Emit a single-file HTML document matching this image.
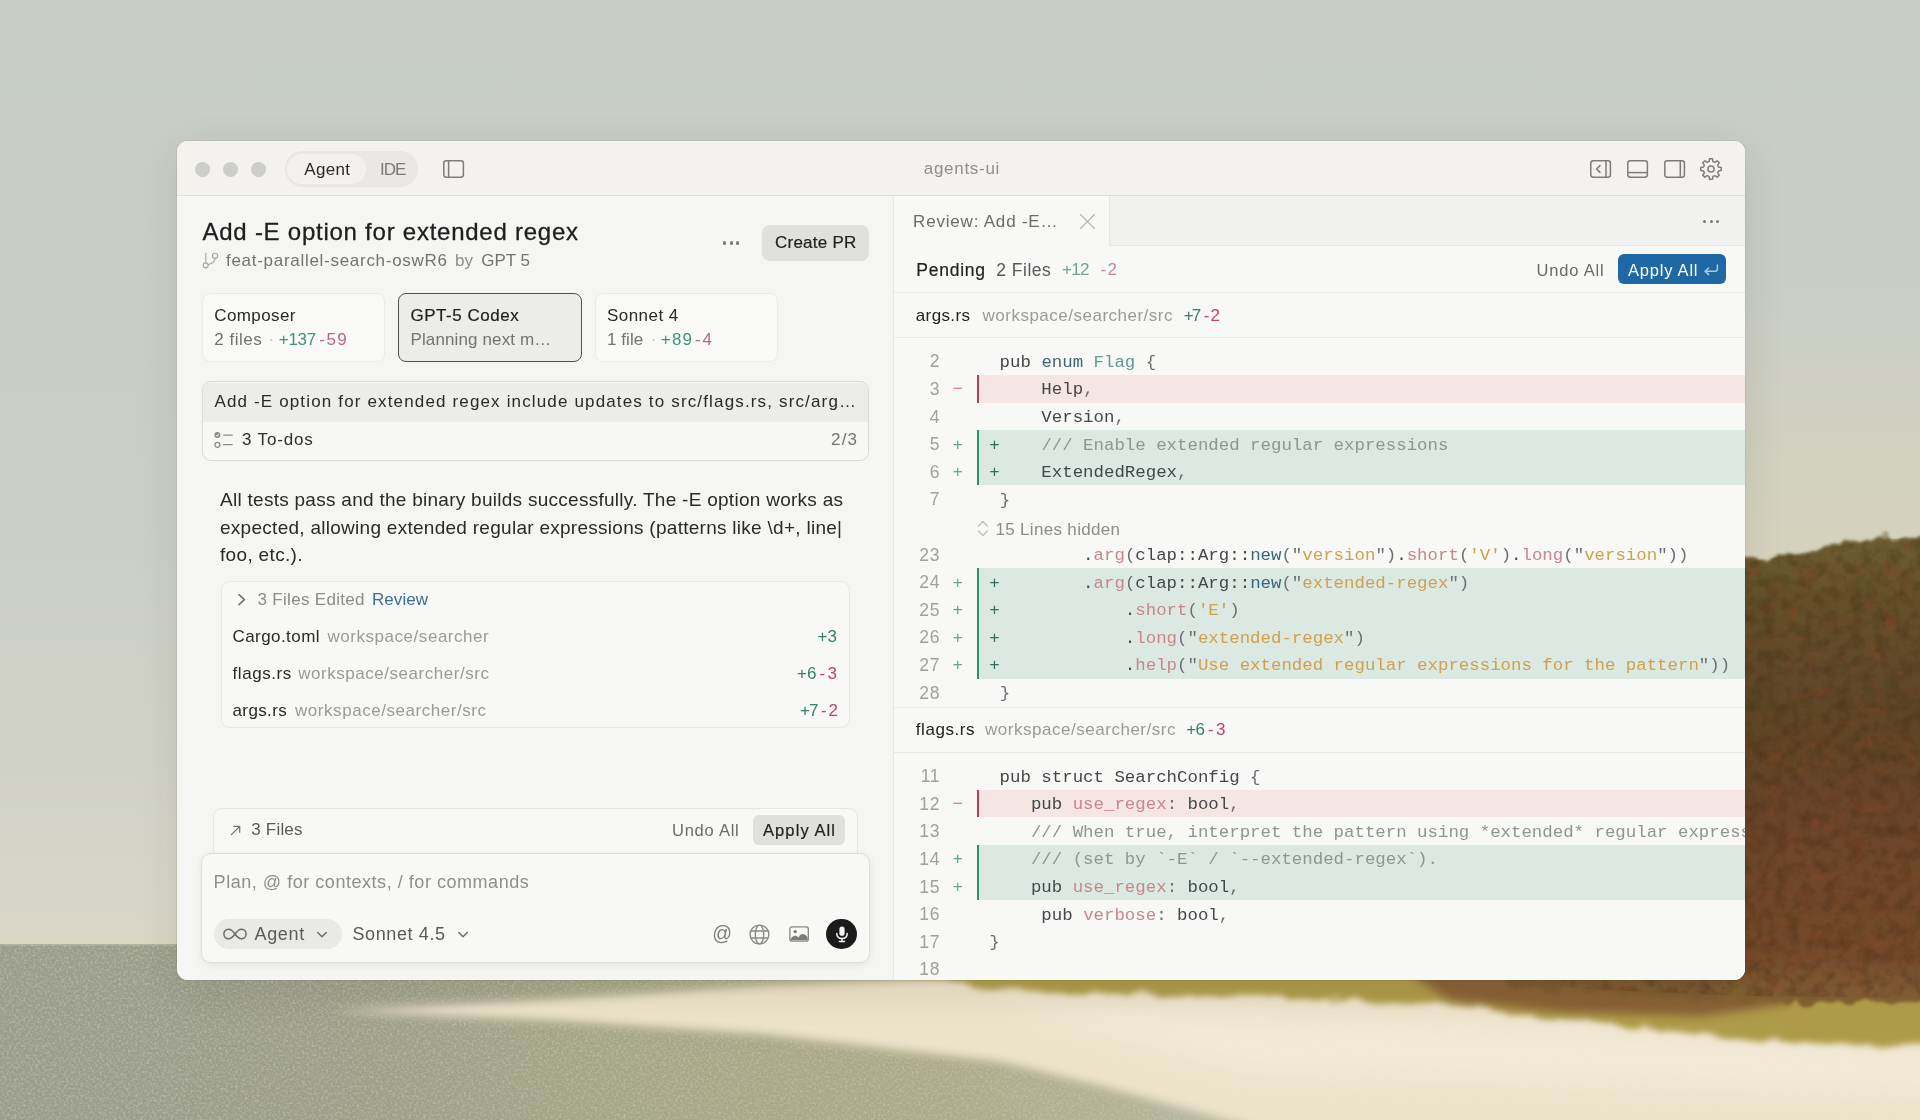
<!DOCTYPE html>
<html lang="en">
<head>
<meta charset="utf-8">
<title>agents-ui</title>
<style>
html,body{margin:0;padding:0;}
body{width:1920px;height:1120px;overflow:hidden;position:relative;background:#c8cdc6;font-family:"Liberation Sans",Arial,sans-serif;}
#bg{position:absolute;left:0;top:0;width:1920px;height:1120px;}
#shadow{position:absolute;left:177px;top:141px;width:1568px;height:838.5px;border-radius:11px;box-shadow:0 0 0 1px rgba(0,0,0,.05),0 10px 40px rgba(40,40,20,.10);}
#win{position:absolute;left:177px;top:141px;width:1568px;height:838.5px;border-radius:11px;overflow:hidden;background:#f7f7f5;}
#o{position:absolute;left:-177px;top:-141px;width:1920px;height:1120px;will-change:transform;}
.t{position:absolute;white-space:pre;display:block;}
.r{position:absolute;box-sizing:border-box;}
.ic{position:absolute;overflow:visible;}
.code{position:absolute;left:0;width:1920px;font-family:"Liberation Mono","DejaVu Sans Mono",monospace;font-size:17.4px;line-height:27.6px;white-space:pre;color:#43474a;}
.ln{position:absolute;height:27.6px;left:893px;width:852px;font-family:"Liberation Mono","DejaVu Sans Mono",monospace;font-size:17.4px;line-height:27.6px;white-space:pre;color:#43474a;}
.ln.add{background:linear-gradient(#dce9e3,#dce9e3) no-repeat 86px 0/100% 100%;}
.ln.del{background:linear-gradient(#f5e6e4,#f5e6e4) no-repeat 86px 0/100% 100%;}
.ln i{position:absolute;left:84px;top:0;width:2px;height:100%;font-style:normal;}
.ln.add i{background:#2f8f6b;}
.ln.del i{background:#c2385f;}
.ln b{position:absolute;font-weight:400;top:1.4px;}
.ln .n{right:805px;color:#a0a09e;text-align:right;font-family:"Liberation Sans",Arial,sans-serif;font-size:17.5px;letter-spacing:.6px;top:1px;}
.ln .m{left:59.4px;}
.ln.add .m{color:#62a98b;}
.ln.del .m{color:#d27f92;}
.ln .c{left:96.2px;}
.k1{color:#3f6570}.k2{color:#5f9a94}.k3{color:#346878}.fn{color:#c8868b}.s{color:#d0a04a}.cm{color:#8d9691}.p{color:#6b7073}.pl{color:#2f6e5c}
</style>
</head>
<body>
<svg id="bg" width="1920" height="1120" viewBox="0 0 1920 1120">
<defs>
<linearGradient id="sky" x1="0" y1="0" x2="0" y2="1120" gradientUnits="userSpaceOnUse">
<stop offset="0" stop-color="#c8cdc6"/><stop offset="0.45" stop-color="#cacec5"/><stop offset="0.68" stop-color="#d1d2c7"/><stop offset="0.80" stop-color="#d6d5c8"/><stop offset="0.845" stop-color="#dad6c5"/>
</linearGradient>
<linearGradient id="water" x1="0" y1="0" x2="1920" y2="0" gradientUnits="userSpaceOnUse">
<stop offset="0" stop-color="#999c8d"/><stop offset="0.16" stop-color="#9c9e8b"/><stop offset="0.36" stop-color="#a7a787"/><stop offset="0.5" stop-color="#adab89"/><stop offset="0.66" stop-color="#b8b9a4"/>
</linearGradient>
<linearGradient id="skyr" x1="0" y1="280" x2="0" y2="560" gradientUnits="userSpaceOnUse">
<stop offset="0" stop-color="#d6d2b8" stop-opacity="0"/><stop offset="1" stop-color="#d6d3bc" stop-opacity="0.9"/>
</linearGradient>
<linearGradient id="bush" x1="0" y1="530" x2="0" y2="1000" gradientUnits="userSpaceOnUse">
<stop offset="0" stop-color="#6f5f31"/><stop offset="0.14" stop-color="#64502b"/><stop offset="0.4" stop-color="#604528"/><stop offset="0.65" stop-color="#6c4529"/><stop offset="0.9" stop-color="#74492b"/><stop offset="1" stop-color="#806033"/>
</linearGradient>
<filter id="b3" x="-10%" y="-10%" width="120%" height="120%"><feGaussianBlur stdDeviation="2.5"/></filter>
<filter id="b6" x="-10%" y="-30%" width="120%" height="160%"><feGaussianBlur stdDeviation="5"/></filter>
<filter id="b8" x="-10%" y="-20%" width="120%" height="140%"><feGaussianBlur stdDeviation="8"/></filter>
<filter id="b14" x="-10%" y="-30%" width="120%" height="160%"><feGaussianBlur stdDeviation="14"/></filter>
<filter id="rough" filterUnits="userSpaceOnUse" x="1480" y="500" width="540" height="540"><feTurbulence type="fractalNoise" baseFrequency="0.035" numOctaves="3" seed="3" result="n"/><feDisplacementMap in="SourceGraphic" in2="n" scale="22" xChannelSelector="R" yChannelSelector="G"/><feGaussianBlur stdDeviation="1.6"/></filter>
<filter id="rough2" filterUnits="userSpaceOnUse" x="820" y="940" width="1200" height="140"><feTurbulence type="fractalNoise" baseFrequency="0.03 0.09" numOctaves="3" seed="5" result="n"/><feDisplacementMap in="SourceGraphic" in2="n" scale="16" xChannelSelector="R" yChannelSelector="G"/><feGaussianBlur stdDeviation="3"/></filter>
<filter id="mottle" color-interpolation-filters="sRGB" x="0" y="0" width="100%" height="100%"><feTurbulence type="fractalNoise" baseFrequency="0.08" numOctaves="4" seed="11"/><feColorMatrix type="matrix" values="0 0 0 0 0.2  0 0 0 0 0.13  0 0 0 0 0.06  2.2 0 0 0 -0.9"/></filter>
<filter id="mottle2" color-interpolation-filters="sRGB" x="0" y="0" width="100%" height="100%"><feTurbulence type="fractalNoise" baseFrequency="0.06" numOctaves="3" seed="29"/><feColorMatrix type="matrix" values="0 0 0 0 0.56  0 0 0 0 0.27  0 0 0 0 0.15  0 3 0 0 -1.7"/></filter>
<filter id="grain" color-interpolation-filters="sRGB" x="0" y="0" width="100%" height="100%"><feTurbulence type="fractalNoise" baseFrequency="0.42" numOctaves="3" seed="7"/><feColorMatrix type="matrix" values="0 0 0 0 0.8  0 0 0 0 0.8  0 0 0 0 0.7  2.4 0 0 0 -1.0"/></filter>
<clipPath id="bushclip"><path d="M1560 624 L1640 584 L1745 562 L1800 554 L1850 544 L1920 536 L1920 998 L1745 996 L1600 990 L1560 986 Z"/></clipPath>
<clipPath id="lowclip"><path d="M0 944 H1000 V974 L760 984 L560 997 L330 1009 L560 1023 L760 1036 L1000 1064 L1100 1088 L1300 1140 H0 Z"/></clipPath>
</defs>
<rect width="1920" height="1120" fill="url(#sky)"/>
<rect x="1480" y="280" width="440" height="320" fill="url(#skyr)"/>
<!-- water / ground -->
<rect x="0" y="944" width="1920" height="176" fill="url(#water)"/>
<rect x="0" y="938" width="430" height="7" fill="#ddd5b6" opacity=".55" filter="url(#b3)"/>
<!-- sand -->
<path d="M330 1011 L560 999 L760 986 L1000 976 L2000 976 L2000 1140 L1300 1140 L1100 1086 L1000 1062 L760 1034 L560 1021 Z" fill="#ede2ca" filter="url(#b6)"/>
<path d="M1000 1005 L2000 1044 L2000 1100 L1250 1075 Z" fill="#f4ecdb" opacity=".7" filter="url(#b14)"/>
<!-- grass band -->
<path d="M860 966 L2000 966 L2000 1050 L1760 1040 L1600 1022 L1450 1006 L1250 996 L1000 990 Z" fill="#ae9b49" filter="url(#rough2)"/>
<path d="M1400 968 L1800 968 L1790 1004 L1700 1016 L1560 1012 L1450 1000 Z" fill="#7f5230" opacity=".8" filter="url(#b6)"/>
<!-- bush -->
<path d="M1500 640 L1640 584 L1745 560 L1800 552 L1850 542 L1920 534 L2000 530 L2000 1004 L1745 1002 L1600 996 L1500 985 Z" fill="url(#bush)" filter="url(#rough)"/>
<g clip-path="url(#bushclip)"><rect x="1560" y="520" width="360" height="490" filter="url(#mottle)" opacity=".3"/><rect x="1560" y="520" width="360" height="490" filter="url(#mottle2)" opacity=".45"/></g>
<g clip-path="url(#lowclip)"><rect x="0" y="944" width="1920" height="176" filter="url(#grain)" opacity=".55"/></g>
</svg>

<div id="shadow"></div>
<div id="win"><div id="o">
<div class="r" style="left:177.00px;top:141.00px;width:1568.00px;height:55.00px;background:#f3f2ef;border-bottom:1px solid #e0dfdc;"></div>
<div class="r" style="left:195.25px;top:161.50px;width:15.00px;height:15.00px;border-radius:50%;background:#cdcdcb;"></div>
<div class="r" style="left:223.00px;top:161.50px;width:15.00px;height:15.00px;border-radius:50%;background:#cdcdcb;"></div>
<div class="r" style="left:250.50px;top:161.50px;width:15.00px;height:15.00px;border-radius:50%;background:#cdcdcb;"></div>
<div class="r" style="left:284.70px;top:151.40px;width:133.80px;height:35.20px;border-radius:17.6px;background:#e9e8e5;"></div>
<div class="r" style="left:286.80px;top:153.60px;width:79.70px;height:30.80px;border-radius:15.4px;background:#f2f1ee;border:1px solid #f5f4f1;"></div>
<span class="t " style="left:304.25px;top:158.21px;font-size:17px;line-height:24px;color:#2a2a2a;letter-spacing:0.331px;">Agent</span>
<span class="t " style="left:380.00px;top:158.21px;font-size:17px;line-height:24px;color:#7a7a78;letter-spacing:-1.044px;">IDE</span>
<svg class="ic" style="left:441.6px;top:159px" width="24" height="20" viewBox="0 0 24 20"><rect x="1.8" y="1.8" width="19.6" height="16.4" rx="2.4" fill="none" stroke="#7c7c7a" stroke-width="1.5"/><line x1="6.6" y1="2" x2="6.6" y2="18" stroke="#7c7c7a" stroke-width="1.5"/></svg>
<span class="t " style="left:923.75px;top:157.46px;font-size:17px;line-height:24px;color:#8e8e8c;letter-spacing:0.714px;">agents-ui</span>
<svg class="ic" style="left:1589px;top:159px" width="24" height="20" viewBox="0 0 24 20"><rect x="1.8" y="1.8" width="19.6" height="16.4" rx="2.4" fill="none" stroke="#7c7c7a" stroke-width="1.5"/><line x1="17" y1="2" x2="17" y2="18" stroke="#7c7c7a" stroke-width="1.5"/><path d="M11 6.6 L7.6 10 L11 13.4" fill="none" stroke="#7c7c7a" stroke-width="1.5" stroke-linecap="round" stroke-linejoin="round"/></svg>
<svg class="ic" style="left:1625.75px;top:159px" width="24" height="20" viewBox="0 0 24 20"><rect x="1.8" y="1.8" width="19.6" height="16.4" rx="2.4" fill="none" stroke="#7c7c7a" stroke-width="1.5"/><line x1="2" y1="13.6" x2="21.2" y2="13.6" stroke="#7c7c7a" stroke-width="1.5"/></svg>
<svg class="ic" style="left:1662.75px;top:159px" width="24" height="20" viewBox="0 0 24 20"><rect x="1.8" y="1.8" width="19.6" height="16.4" rx="2.4" fill="none" stroke="#7c7c7a" stroke-width="1.5"/><line x1="17.3" y1="2" x2="17.3" y2="18" stroke="#7c7c7a" stroke-width="1.5"/></svg>
<svg class="ic" style="left:1699px;top:157px" width="24" height="24" viewBox="0 0 24 24" fill="none" stroke="#7c7c7a" stroke-width="1.45" stroke-linecap="round" stroke-linejoin="round"><path d="M10.07 4.55 L10.48 1.81 L13.52 1.81 L13.93 4.55 L15.91 5.37 L18.13 3.72 L20.28 5.87 L18.63 8.09 L19.45 10.07 L22.19 10.48 L22.19 13.52 L19.45 13.93 L18.63 15.91 L20.28 18.13 L18.13 20.28 L15.91 18.63 L13.93 19.45 L13.52 22.19 L10.48 22.19 L10.07 19.45 L8.09 18.63 L5.87 20.28 L3.72 18.13 L5.37 15.91 L4.55 13.93 L1.81 13.52 L1.81 10.48 L4.55 10.07 L5.37 8.09 L3.72 5.87 L5.87 3.72 L8.09 5.37 Z"/><circle cx="12" cy="12" r="3.1"/></svg>
<div class="r" style="left:177.00px;top:196.00px;width:716.00px;height:784.00px;background:#f5f5f3;"></div>
<span class="t " style="left:202.50px;top:219.78px;font-size:24px;line-height:24px;color:#1e1e1e;letter-spacing:0.751px;-webkit-text-stroke:0.3px #1e1e1e;">Add -E option for extended regex</span>
<svg class="ic" style="left:200px;top:250px" width="20" height="20" viewBox="0 0 20 20" fill="none" stroke="#a6a6a4" stroke-width="1.15" stroke-linecap="round"><path d="M5.8 3.2 V12.7"/><circle cx="5.7" cy="15.3" r="2.5"/><circle cx="15" cy="5.8" r="2.6"/><path d="M15 8.4 C15 12.6 11.6 13.4 8.2 14.7"/></svg>
<span class="t " style="left:226.00px;top:248.71px;font-size:17px;line-height:24px;color:#737371;letter-spacing:0.714px;">feat-parallel-search-oswR6</span>
<span class="t " style="left:455.00px;top:248.71px;font-size:17px;line-height:24px;color:#8e8e8c;letter-spacing:0.045px;">by</span>
<span class="t " style="left:481.25px;top:248.71px;font-size:17px;line-height:24px;color:#737371;letter-spacing:-0.017px;">GPT 5</span>
<div class="r" style="left:723.20px;top:241.40px;width:3.20px;height:3.20px;border-radius:50%;background:#7a7a78;"></div>
<div class="r" style="left:729.70px;top:241.40px;width:3.20px;height:3.20px;border-radius:50%;background:#7a7a78;"></div>
<div class="r" style="left:736.20px;top:241.40px;width:3.20px;height:3.20px;border-radius:50%;background:#7a7a78;"></div>
<div class="r" style="left:762.00px;top:224.50px;width:107.25px;height:36.25px;border-radius:8px;background:#e0e0de;"></div>
<span class="t " style="left:775.00px;top:231.46px;font-size:17px;line-height:24px;color:#222;letter-spacing:0.236px;-webkit-text-stroke:0.2px #222;">Create PR</span>
<div class="r" style="left:202.00px;top:292.50px;width:182.50px;height:69.50px;border-radius:8px;border:1.5px solid #ebebe9;background:#f9f9f7;"></div>
<div class="r" style="left:398.00px;top:292.50px;width:184.00px;height:69.50px;border-radius:8px;border:1.5px solid #505050;background:#ececea;"></div>
<div class="r" style="left:595.00px;top:292.50px;width:183.00px;height:69.50px;border-radius:8px;border:1.5px solid #ebebe9;background:#f9f9f7;"></div>
<span class="t " style="left:214.25px;top:303.96px;font-size:17px;line-height:24px;color:#2a2a2a;letter-spacing:0.405px;">Composer</span>
<span class="t " style="left:214.25px;top:327.71px;font-size:17px;line-height:24px;color:#737371;letter-spacing:0.515px;">2 files</span>
<span class="t " style="left:268.50px;top:327.71px;font-size:17px;line-height:24px;color:#c4c4c2;letter-spacing:0.000px;">·</span>
<span class="t " style="left:278.75px;top:327.71px;font-size:17px;line-height:24px;color:#3f9473;letter-spacing:-0.264px;">+137</span>
<span class="t " style="left:319.25px;top:327.71px;font-size:17px;line-height:24px;color:#b9687a;letter-spacing:1.465px;">-59</span>
<span class="t " style="left:410.50px;top:303.96px;font-size:17px;line-height:24px;color:#1e1e1e;letter-spacing:0.526px;-webkit-text-stroke:0.2px #1e1e1e;">GPT-5 Codex</span>
<span class="t " style="left:410.50px;top:327.71px;font-size:17px;line-height:24px;color:#737371;letter-spacing:0.123px;">Planning next m…</span>
<span class="t " style="left:607.00px;top:303.96px;font-size:17px;line-height:24px;color:#2a2a2a;letter-spacing:0.456px;">Sonnet 4</span>
<span class="t " style="left:607.00px;top:327.71px;font-size:17px;line-height:24px;color:#737371;letter-spacing:0.068px;">1 file</span>
<span class="t " style="left:650.80px;top:327.71px;font-size:17px;line-height:24px;color:#c4c4c2;letter-spacing:0.000px;">·</span>
<span class="t " style="left:660.75px;top:327.71px;font-size:17px;line-height:24px;color:#3f9473;letter-spacing:1.206px;">+89</span>
<span class="t " style="left:695.00px;top:327.71px;font-size:17px;line-height:24px;color:#b9687a;letter-spacing:1.884px;">-4</span>
<div class="r" style="left:201.50px;top:381.00px;width:667.50px;height:79.50px;border-radius:9px;border:1.5px solid #d9d9d7;background:#f7f7f5;overflow:hidden;"></div>
<div class="r" style="left:203.00px;top:382.50px;width:664.50px;height:39.50px;border-radius:7.5px 7.5px 0 0;background:#ececea;"></div>
<span class="t " style="left:214.40px;top:389.71px;font-size:17px;line-height:24px;color:#2a2a2a;letter-spacing:1.152px;">Add -E option for extended regex include updates to src/flags.rs, src/arg…</span>
<svg class="ic" style="left:212.5px;top:430.5px" width="21" height="19" viewBox="0 0 21 19" fill="none" stroke="#8a8a88" stroke-width="1.3" stroke-linecap="round"><circle cx="4.4" cy="4.1" r="3" fill="#8a8a88" stroke="none"/><path d="M3.1 4.2 L4 5.2 L5.8 3" stroke="#f7f7f5" stroke-width="1"/><circle cx="4.4" cy="13.8" r="2.5"/><path d="M10.6 4.2 H19.2"/><path d="M10.6 13.6 H19.2"/></svg>
<span class="t " style="left:242.00px;top:427.71px;font-size:17px;line-height:24px;color:#2f2f2f;letter-spacing:0.843px;">3 To-dos</span>
<span class="t " style="left:831.00px;top:427.71px;font-size:17px;line-height:24px;color:#737371;letter-spacing:1.184px;">2/3</span>
<span class="t " style="left:220.00px;top:488.27px;font-size:19px;line-height:24px;color:#2a2a2a;letter-spacing:0.273px;">All tests pass and the binary builds successfully. The -E option works as</span>
<span class="t " style="left:220.00px;top:515.77px;font-size:19px;line-height:24px;color:#2a2a2a;letter-spacing:0.275px;">expected, allowing extended regular expressions (patterns like \d+, line|</span>
<span class="t " style="left:220.00px;top:543.27px;font-size:19px;line-height:24px;color:#2a2a2a;letter-spacing:0.330px;">foo, etc.).</span>
<div class="r" style="left:221.00px;top:581.00px;width:628.50px;height:146.50px;border-radius:9px;border:1.5px solid #e8e8e6;background:#f8f8f6;"></div>
<svg class="ic" style="left:235px;top:591px" width="14" height="17" viewBox="0 0 14 17" fill="none" stroke="#6f6f6d" stroke-width="1.5" stroke-linecap="round" stroke-linejoin="round"><path d="M4 3.6 L9.4 8.6 L4 13.6"/></svg>
<span class="t " style="left:257.50px;top:587.71px;font-size:17px;line-height:24px;color:#8c8c8a;letter-spacing:0.308px;">3 Files Edited</span>
<span class="t " style="left:372.00px;top:587.71px;font-size:17px;line-height:24px;color:#3a6f92;letter-spacing:0.052px;">Review</span>
<span class="t " style="left:232.50px;top:625.21px;font-size:17px;line-height:24px;color:#2a2a2a;letter-spacing:0.429px;">Cargo.toml</span>
<span class="t " style="left:327.50px;top:625.21px;font-size:17px;line-height:24px;color:#9a9a98;letter-spacing:0.537px;">workspace/searcher</span>
<span class="t " style="left:817.50px;top:625.21px;font-size:17px;line-height:24px;color:#35806a;letter-spacing:0.118px;">+3</span>
<span class="t " style="left:232.50px;top:661.96px;font-size:17px;line-height:24px;color:#2a2a2a;letter-spacing:0.565px;">flags.rs</span>
<span class="t " style="left:298.25px;top:661.96px;font-size:17px;line-height:24px;color:#9a9a98;letter-spacing:0.535px;">workspace/searcher/src</span>
<span class="t " style="left:797.00px;top:661.96px;font-size:17px;line-height:24px;color:#35806a;letter-spacing:0.118px;">+6</span>
<span class="t " style="left:819.50px;top:661.96px;font-size:17px;line-height:24px;color:#bf4566;letter-spacing:2.384px;">-3</span>
<span class="t " style="left:232.50px;top:698.96px;font-size:17px;line-height:24px;color:#2a2a2a;letter-spacing:0.383px;">args.rs</span>
<span class="t " style="left:295.00px;top:698.96px;font-size:17px;line-height:24px;color:#9a9a98;letter-spacing:0.547px;">workspace/searcher/src</span>
<span class="t " style="left:800.00px;top:698.96px;font-size:17px;line-height:24px;color:#35806a;letter-spacing:-0.882px;">+7</span>
<span class="t " style="left:821.00px;top:698.96px;font-size:17px;line-height:24px;color:#bf4566;letter-spacing:1.884px;">-2</span>
<div class="r" style="left:212.50px;top:808.00px;width:645.50px;height:62.00px;border-radius:9px 9px 0 0;border:1.5px solid #e6e6e4;background:#f8f8f6;"></div>
<svg class="ic" style="left:227.5px;top:822.5px" width="15" height="15" viewBox="0 0 15 15" fill="none" stroke="#727270" stroke-width="1.25" stroke-linecap="round" stroke-linejoin="round"><path d="M3.4 11.6 L11.4 3.6"/><path d="M5.8 3.3 H11.7 V9.2"/></svg>
<span class="t " style="left:251.25px;top:818.21px;font-size:17px;line-height:24px;color:#5a5a58;letter-spacing:0.197px;">3 Files</span>
<span class="t " style="left:672.00px;top:818.38px;font-size:16.5px;line-height:24px;color:#6a6a68;letter-spacing:0.756px;">Undo All</span>
<div class="r" style="left:753.25px;top:814.50px;width:91.25px;height:30.00px;border-radius:6px;background:#dfdfdd;"></div>
<span class="t " style="left:763.00px;top:818.38px;font-size:16.5px;line-height:24px;color:#1e1e1e;letter-spacing:1.089px;-webkit-text-stroke:0.2px #1e1e1e;">Apply All</span>
<div class="r" style="left:200.50px;top:853.00px;width:669.50px;height:109.50px;border-radius:10px;border:1.5px solid #dddddb;background:#f8f8f6;box-shadow:0 2px 10px rgba(0,0,0,.07);"></div>
<span class="t " style="left:213.60px;top:869.86px;font-size:18px;line-height:24px;color:#8f8f8d;letter-spacing:0.536px;">Plan, @ for contexts, / for commands</span>
<div class="r" style="left:213.75px;top:919.25px;width:128.25px;height:29.50px;border-radius:15px;background:#e9e9e7;"></div>
<svg class="ic" style="left:222px;top:926px" width="26" height="16" viewBox="0 0 26 16" fill="none" stroke="#6a6a68" stroke-width="1.5"><path d="M13 8 C10.6 4.6 8.8 3.2 6.6 3.2 C3.8 3.2 1.9 5.3 1.9 8 C1.9 10.7 3.8 12.8 6.6 12.8 C8.8 12.8 10.6 11.4 13 8 C15.4 4.6 17.2 3.2 19.4 3.2 C22.2 3.2 24.1 5.3 24.1 8 C24.1 10.7 22.2 12.8 19.4 12.8 C17.2 12.8 15.4 11.4 13 8 Z"/></svg>
<span class="t " style="left:254.50px;top:922.36px;font-size:18px;line-height:24px;color:#5a5a58;letter-spacing:0.678px;">Agent</span>
<svg class="ic" style="left:314.6px;top:929px" width="14" height="12" viewBox="0 0 14 12" fill="none" stroke="#6a6a68" stroke-width="1.4" stroke-linecap="round" stroke-linejoin="round"><path d="M2.7 3.4 L7 7.7 L11.3 3.4"/></svg>
<span class="t " style="left:352.50px;top:922.36px;font-size:18px;line-height:24px;color:#5a5a58;letter-spacing:0.603px;">Sonnet 4.5</span>
<svg class="ic" style="left:455.7px;top:929px" width="14" height="12" viewBox="0 0 14 12" fill="none" stroke="#6a6a68" stroke-width="1.4" stroke-linecap="round" stroke-linejoin="round"><path d="M2.7 3.4 L7 7.7 L11.3 3.4"/></svg>
<span class="t " style="left:712.30px;top:921.34px;font-size:19.5px;line-height:24px;color:#7c7c7a;letter-spacing:0.000px;">@</span>
<svg class="ic" style="left:747.5px;top:922.5px" width="23" height="23" viewBox="0 0 23 23" fill="none" stroke="#8a8a88" stroke-width="1.4"><circle cx="11.5" cy="11.5" r="9.4"/><ellipse cx="11.5" cy="11.5" rx="4.2" ry="9.4"/><path d="M3 8 H20 M3 15 H20"/></svg>
<svg class="ic" style="left:787.5px;top:925px" width="23" height="18" viewBox="0 0 23 18"><rect x="1.9" y="1.9" width="18.4" height="14.2" rx="2.2" fill="none" stroke="#8a8a88" stroke-width="1.4"/><circle cx="7.2" cy="6.6" r="1.7" fill="#7c7c7a"/><path d="M3 15.2 L3 13.4 C5 10.4 8 9.6 10.4 12.4 C12.6 8.2 16.6 7.8 19.4 12.2 V15.2 Z" fill="#7c7c7a"/></svg>
<div class="r" style="left:826.25px;top:918.75px;width:30.75px;height:30.50px;border-radius:50%;background:#1b1b1b;"></div>
<svg class="ic" style="left:831.6px;top:924px" width="20" height="20" viewBox="0 0 20 20" fill="none" stroke="#f4f4f2" stroke-width="1.5" stroke-linecap="round"><rect x="7.4" y="2.4" width="5.2" height="9.4" rx="2.6" fill="#f4f4f2" stroke="none"/><path d="M4.8 9.6 C4.8 13 7.2 14.6 10 14.6 C12.8 14.6 15.2 13 15.2 9.6"/><path d="M10 14.8 V17.4 M7.4 17.5 H12.6"/></svg>
<div class="r" style="left:893.00px;top:196.00px;width:852.00px;height:784.00px;background:#f8f8f7;border-left:1px solid #e7e7e5;"></div>
<div class="r" style="left:894.00px;top:196.00px;width:851.00px;height:49.50px;background:#f1f1ef;border-bottom:1px solid #e7e7e5;"></div>
<div class="r" style="left:894.00px;top:196.00px;width:216.00px;height:50.00px;background:#f8f8f7;border-right:1px solid #e7e7e5;"></div>
<span class="t " style="left:913.10px;top:209.96px;font-size:17px;line-height:24px;color:#6c6c6a;letter-spacing:0.799px;">Review: Add -E…</span>
<svg class="ic" style="left:1079px;top:213px" width="17" height="17" viewBox="0 0 17 17" fill="none" stroke="#b0b0ae" stroke-width="1.3" stroke-linecap="round"><path d="M1.6 1.6 L15.4 15.4 M15.4 1.6 L1.6 15.4"/></svg>
<div class="r" style="left:1703.10px;top:219.65px;width:3.20px;height:3.20px;border-radius:50%;background:#7a7a78;"></div>
<div class="r" style="left:1709.60px;top:219.65px;width:3.20px;height:3.20px;border-radius:50%;background:#7a7a78;"></div>
<div class="r" style="left:1716.10px;top:219.65px;width:3.20px;height:3.20px;border-radius:50%;background:#7a7a78;"></div>
<div class="r" style="left:894.00px;top:292.00px;width:851.00px;height:1.00px;background:#e9e9e7;"></div>
<span class="t " style="left:916.25px;top:257.54px;font-size:17.5px;line-height:24px;color:#222;letter-spacing:0.754px;-webkit-text-stroke:0.2px #222;">Pending</span>
<span class="t " style="left:996.25px;top:257.54px;font-size:17.5px;line-height:24px;color:#58585a;letter-spacing:0.493px;">2 Files</span>
<span class="t " style="left:1062.00px;top:257.71px;font-size:17px;line-height:24px;color:#6ba791;letter-spacing:-0.669px;">+12</span>
<span class="t " style="left:1100.50px;top:257.71px;font-size:17px;line-height:24px;color:#cc8693;letter-spacing:1.384px;">-2</span>
<span class="t " style="left:1536.50px;top:257.88px;font-size:16.5px;line-height:24px;color:#6a6a68;letter-spacing:0.828px;">Undo All</span>
<div class="r" style="left:1617.50px;top:253.75px;width:108.75px;height:30.50px;border-radius:6px;background:#1f68a3;"></div>
<span class="t " style="left:1628.00px;top:257.88px;font-size:16.5px;line-height:24px;color:#ffffff;letter-spacing:0.777px;">Apply All</span>
<svg class="ic" style="left:1703px;top:261px" width="17" height="17" viewBox="0 0 17 17" fill="none" stroke="#a8cbe6" stroke-width="1.5" stroke-linecap="round" stroke-linejoin="round"><path d="M14.4 4 V8.3 a2 2 0 0 1 -2 2 H2.4"/><path d="M5.6 7 L2.2 10.3 L5.6 13.6"/></svg>
<span class="t " style="left:915.75px;top:303.71px;font-size:17px;line-height:24px;color:#222;letter-spacing:0.383px;">args.rs</span>
<span class="t " style="left:982.50px;top:303.71px;font-size:17px;line-height:24px;color:#9a9a98;letter-spacing:0.500px;">workspace/searcher/src</span>
<span class="t " style="left:1183.75px;top:303.71px;font-size:17px;line-height:24px;color:#35806a;letter-spacing:-1.882px;">+7</span>
<span class="t " style="left:1203.75px;top:303.71px;font-size:17px;line-height:24px;color:#bf4566;letter-spacing:1.134px;">-2</span>
<div class="r" style="left:894.00px;top:337.00px;width:851.00px;height:1.00px;background:#e9e9e7;"></div>
<div class="ln" style="top:347.40px"><b class="n">2</b><b class="m"></b><b class="c"> pub <span class="k1">enum</span> <span class="k2">Flag</span> <span class="p">{</span></b></div>
<div class="ln del" style="top:375.00px"><i></i><b class="n">3</b><b class="m">−</b><b class="c">     Help<span class="p">,</span></b></div>
<div class="ln" style="top:402.60px"><b class="n">4</b><b class="m"></b><b class="c">     Version<span class="p">,</span></b></div>
<div class="ln add" style="top:430.20px"><i></i><b class="n">5</b><b class="m">+</b><b class="c"><span class="pl">+</span>    <span class="cm">/// Enable extended regular expressions</span></b></div>
<div class="ln add" style="top:457.80px"><i></i><b class="n">6</b><b class="m">+</b><b class="c"><span class="pl">+</span>    ExtendedRegex<span class="p">,</span></b></div>
<div class="ln" style="top:485.40px"><b class="n">7</b><b class="m"></b><b class="c"> <span class="p">}</span></b></div>
<svg class="ic" style="left:975.5px;top:518.60px" width="14" height="19" viewBox="0 0 14 19" fill="none" stroke="#bcbcba" stroke-width="1.3" stroke-linecap="round" stroke-linejoin="round"><path d="M2.6 7 L7 2.4 L11.4 7 M2.6 12 L7 16.6 L11.4 12"/></svg>
<span class="t " style="left:995.50px;top:517.51px;font-size:17px;line-height:24px;color:#8c8c8a;letter-spacing:0.318px;">15 Lines hidden</span>
<div class="ln" style="top:540.60px"><b class="n">23</b><b class="m"></b><b class="c">         .<span class="fn">arg</span><span class="p">(</span>clap::Arg::<span class="k3">new</span><span class="p">(&quot;</span><span class="s">version</span><span class="p">&quot;)</span>.<span class="fn">short</span><span class="p">(</span><span class="s">'V'</span><span class="p">)</span>.<span class="fn">long</span><span class="p">(&quot;</span><span class="s">version</span><span class="p">&quot;))</span></b></div>
<div class="ln add" style="top:568.20px"><i></i><b class="n">24</b><b class="m">+</b><b class="c"><span class="pl">+</span>        .<span class="fn">arg</span><span class="p">(</span>clap::Arg::<span class="k3">new</span><span class="p">(&quot;</span><span class="s">extended-regex</span><span class="p">&quot;)</span></b></div>
<div class="ln add" style="top:595.80px"><i></i><b class="n">25</b><b class="m">+</b><b class="c"><span class="pl">+</span>            .<span class="fn">short</span><span class="p">(</span><span class="s">'E'</span><span class="p">)</span></b></div>
<div class="ln add" style="top:623.40px"><i></i><b class="n">26</b><b class="m">+</b><b class="c"><span class="pl">+</span>            .<span class="fn">long</span><span class="p">(&quot;</span><span class="s">extended-regex</span><span class="p">&quot;)</span></b></div>
<div class="ln add" style="top:651.00px"><i></i><b class="n">27</b><b class="m">+</b><b class="c"><span class="pl">+</span>            .<span class="fn">help</span><span class="p">(&quot;</span><span class="s">Use extended regular expressions for the pattern</span><span class="p">&quot;))</span></b></div>
<div class="ln" style="top:678.60px"><b class="n">28</b><b class="m"></b><b class="c"> <span class="p">}</span></b></div>
<div class="r" style="left:894.00px;top:706.50px;width:851.00px;height:1.00px;background:#e9e9e7;"></div>
<span class="t " style="left:915.75px;top:718.46px;font-size:17px;line-height:24px;color:#222;letter-spacing:0.565px;">flags.rs</span>
<span class="t " style="left:985.00px;top:718.46px;font-size:17px;line-height:24px;color:#9a9a98;letter-spacing:0.524px;">workspace/searcher/src</span>
<span class="t " style="left:1186.25px;top:718.46px;font-size:17px;line-height:24px;color:#35806a;letter-spacing:-0.632px;">+6</span>
<span class="t " style="left:1208.00px;top:718.46px;font-size:17px;line-height:24px;color:#bf4566;letter-spacing:2.384px;">-3</span>
<div class="r" style="left:894.00px;top:751.50px;width:851.00px;height:1.00px;background:#e9e9e7;"></div>
<div class="ln" style="top:762.20px"><b class="n">11</b><b class="m"></b><b class="c"> pub struct SearchConfig <span class="p">{</span></b></div>
<div class="ln del" style="top:789.80px"><i></i><b class="n">12</b><b class="m">−</b><b class="c">    pub <span class="fn">use_regex</span><span class="p">:</span> bool<span class="p">,</span></b></div>
<div class="ln" style="top:817.40px"><b class="n">13</b><b class="m"></b><b class="c">    <span class="cm">/// When true, interpret the pattern using *extended* regular expressions</span></b></div>
<div class="ln add" style="top:845.00px"><i></i><b class="n">14</b><b class="m">+</b><b class="c">    <span class="cm">/// (set by `-E` / `--extended-regex`).</span></b></div>
<div class="ln add" style="top:872.60px"><i></i><b class="n">15</b><b class="m">+</b><b class="c">    pub <span class="fn">use_regex</span><span class="p">:</span> bool<span class="p">,</span></b></div>
<div class="ln" style="top:900.20px"><b class="n">16</b><b class="m"></b><b class="c">     pub <span class="fn">verbose</span><span class="p">:</span> bool<span class="p">,</span></b></div>
<div class="ln" style="top:927.80px"><b class="n">17</b><b class="m"></b><b class="c"><span class="p">}</span></b></div>
<div class="ln" style="top:955.40px"><b class="n">18</b><b class="m"></b><b class="c"></b></div>
</div></div>
</body>
</html>
